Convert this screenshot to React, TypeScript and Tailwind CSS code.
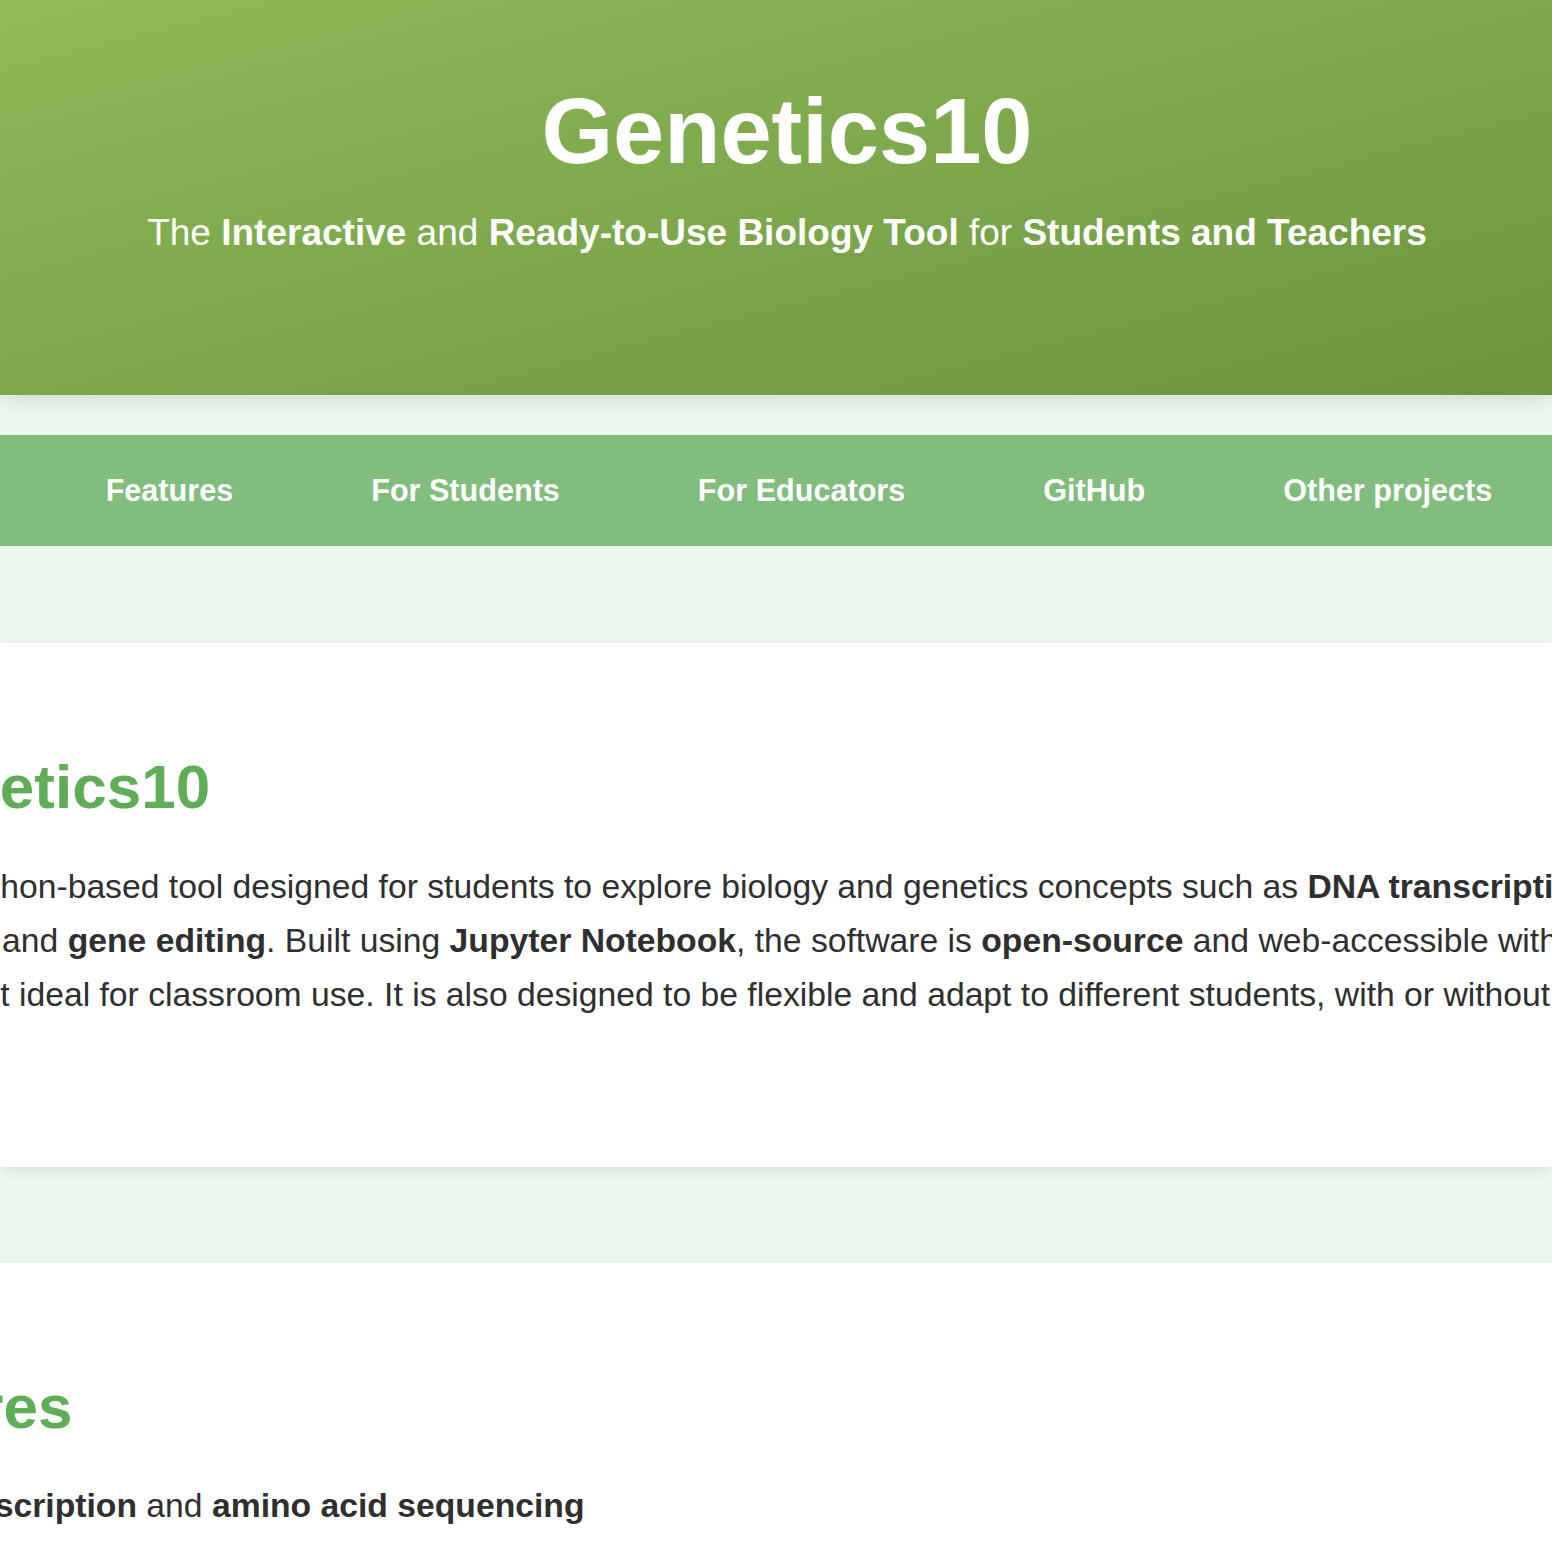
import React from "react"

const navItems = ["Features", "For Students", "For Educators", "GitHub", "Other projects"]

// Feature bullets (only the first one is visible in the viewport)
const features = [
  { lead: "DNA transcription", rest: "amino acid sequencing" },
  { lead: "Mutation analysis", rest: "protein structure comparison" },
  { lead: "Gene editing", rest: "CRISPR simulations" },
]

export default function App() {
  return (
    <div className="min-h-screen overflow-hidden bg-[#eef7f0] font-['Liberation_Sans',Arial,sans-serif] text-[#2f2f2f]">
      {/* Hero header */}
      <header className="relative z-10 h-[395px] bg-gradient-to-br from-[#8fbb58] to-[#6b953f] pl-[22px] pt-[85px] text-center text-white shadow-[0_4px_20px_rgba(0,0,0,0.13)]">
        <h1 className="text-[92px] font-bold leading-none">Genetics10</h1>
        <p className="mt-[37px] text-[37px] leading-none">
          The <strong className="font-bold">Interactive</strong> and{" "}
          <strong className="font-bold">Ready-to-Use Biology Tool</strong> for{" "}
          <strong className="font-bold">Students and Teachers</strong>
        </p>
      </header>

      {/* Navigation */}
      <nav className="mt-[40px] flex h-[111px] items-center justify-center gap-[138px] bg-[#81bd7d] pl-[46px]">
        {navItems.map((item) => (
          <a key={item} href="#" className="whitespace-nowrap text-[30.6px] font-bold text-white">
            {item}
          </a>
        ))}
      </nav>

      {/* About section */}
      <section className="mt-[97px] bg-white pb-[146px] pt-[113px] shadow-[0_4px_12px_rgba(0,0,0,0.09)]">
        <div className="-ml-[317px]">
          <h2 className="whitespace-nowrap text-[62px] font-bold leading-none text-[#5fad56]">About Genetics10</h2>
          <p className="ml-[27px] mt-[41px] whitespace-nowrap text-[33.7px] leading-[54px]">
            Genetics10 is a Python-based tool designed for students to explore biology and genetics concepts such as{" "}
            <strong>DNA transcription</strong>, <strong>amino acid sequencing</strong>, <strong>mutations</strong>,
            <br />
            mutations, codons, and <strong>gene editing</strong>. Built using <strong>Jupyter Notebook</strong>, the
            software is <strong>open-source</strong> and web-accessible without any installation or
            <br />
            any setup, making it ideal for classroom use. It is also designed to be flexible and adapt to different
            students, with or without prior coding experience.
          </p>
        </div>
      </section>

      {/* Features section */}
      <section className="mt-[96px] bg-white pb-[120px] pt-[113px] shadow-[0_4px_12px_rgba(0,0,0,0.09)]">
        <div className="-ml-[317px]">
          <h2 className="whitespace-nowrap text-[62px] font-bold leading-none text-[#5fad56]">Key Features</h2>
          <ul className="mt-[40px] list-disc space-y-[16px] pl-[167px] text-[33.7px] leading-[54px]">
            {features.map((f) => (
              <li key={f.lead} className="whitespace-nowrap">
                <strong>{f.lead}</strong> and <strong>{f.rest}</strong>
              </li>
            ))}
          </ul>
        </div>
      </section>
    </div>
  )
}
